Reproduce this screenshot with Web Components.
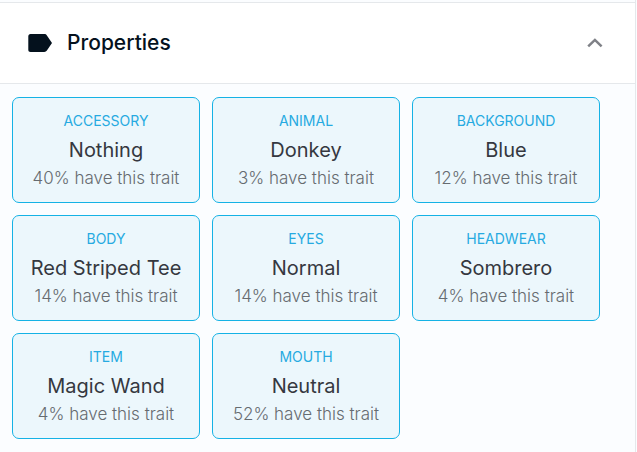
<!DOCTYPE html>
<html lang="en">
<head>
<meta charset="utf-8">
<meta name="viewport" content="width=device-width, initial-scale=1">
<title>Properties</title>
<style>
body { margin: 0; background: #fbfdff; font-family: Inter, "Open Sans", sans-serif; }
</style>
</head>
<body>
<template id="panel-template">
<style>
:host { display: block; box-sizing: border-box; min-height: 100vh; margin-right: 1px; padding-top: 2px; border-right: 1px solid #e5e8eb; background: #fbfdff; }
h2 { margin: 0; font: inherit; }
button { display: flex; align-items: center; box-sizing: border-box; width: 100%; min-height: 82px; padding: 20px 28px; border: 0; border-top: 1px solid #e5e8eb; border-bottom: 1px solid #e5e8eb; background: #fff; color: #04111d; font: 500 21px/30px Inter, "Open Sans", sans-serif; text-align: left; cursor: pointer; }
.tag { width: 24px; height: 18px; margin-right: 15px; fill: #04111d; }
.label { flex: 1; }
.chevron { width: 24px; height: 24px; fill: none; stroke: #7f8187; stroke-width: 2.5; }
.content { display: grid; grid-template-columns: repeat(3, minmax(0, 1fr)); gap: 12px; padding: 13px 35px 13px 12px; }
.content[hidden] { display: none; }
button[aria-expanded="false"] .chevron { transform: rotate(180deg); }
</style>
<h2><button type="button" aria-expanded="true" aria-controls="content">
<svg class="tag" viewBox="0 0 24 18" aria-hidden="true"><path d="M2.5 0H16.2C17.4 0 18.3.5 18.9 1.4L24 9L18.9 16.6C18.3 17.5 17.4 18 16.2 18H2.5C1.1 18 .3 17 .3 15.7V2.3C.3 1 1.1 0 2.5 0Z"/></svg>
<span class="label"><slot name="heading"></slot></span>
<svg class="chevron" viewBox="0 0 24 24" aria-hidden="true"><path d="M5.2 15.4L11.9 8.9L18.6 15.4"/></svg>
</button></h2>
<div class="content" id="content" role="list"><slot></slot></div>
</template>
<template id="trait-template">
<style>
:host { display: block; box-sizing: border-box; padding: 12px 8px 14px; border: 1px solid #15b2e5; border-radius: 7px; background: #ecf7fc; text-align: center; }
div { overflow-wrap: anywhere; }
.type { color: #26aae1; font-size: 14px; line-height: 22px; text-transform: uppercase; }
.name { color: #353840; font-size: 20px; line-height: 36px; }
.rarity { color: #666b70; font-size: 17px; line-height: 20px; font-weight: 300; }
</style>
<div class="type"><slot name="type"></slot></div>
<div class="name"><slot></slot></div>
<div class="rarity"><slot name="rarity"></slot></div>
</template>
<properties-panel>
<span slot="heading">Properties</span>
<trait-card><span slot="type">ACCESSORY</span>Nothing<span slot="rarity">40% have this trait</span></trait-card>
<trait-card><span slot="type">ANIMAL</span>Donkey<span slot="rarity">3% have this trait</span></trait-card>
<trait-card><span slot="type">BACKGROUND</span>Blue<span slot="rarity">12% have this trait</span></trait-card>
<trait-card><span slot="type">BODY</span>Red Striped Tee<span slot="rarity">14% have this trait</span></trait-card>
<trait-card><span slot="type">EYES</span>Normal<span slot="rarity">14% have this trait</span></trait-card>
<trait-card><span slot="type">HEADWEAR</span>Sombrero<span slot="rarity">4% have this trait</span></trait-card>
<trait-card><span slot="type">ITEM</span>Magic Wand<span slot="rarity">4% have this trait</span></trait-card>
<trait-card><span slot="type">MOUTH</span>Neutral<span slot="rarity">52% have this trait</span></trait-card>
</properties-panel>
<script>
class PropertiesPanel extends HTMLElement {
  constructor() {
    super();
    const root = this.attachShadow({ mode: "open" });
    root.append(document.getElementById("panel-template").content.cloneNode(true));
    const button = root.querySelector("button");
    button.addEventListener("click", () => {
      const open = button.getAttribute("aria-expanded") === "true";
      button.setAttribute("aria-expanded", String(!open));
      root.getElementById("content").hidden = open;
    });
  }
}
class TraitCard extends HTMLElement {
  constructor() {
    super();
    this.attachShadow({ mode: "open" }).append(document.getElementById("trait-template").content.cloneNode(true));
  }
  connectedCallback() { this.setAttribute("role", "listitem"); }
}
customElements.define("properties-panel", PropertiesPanel);
customElements.define("trait-card", TraitCard);
</script>
</body>
</html>
